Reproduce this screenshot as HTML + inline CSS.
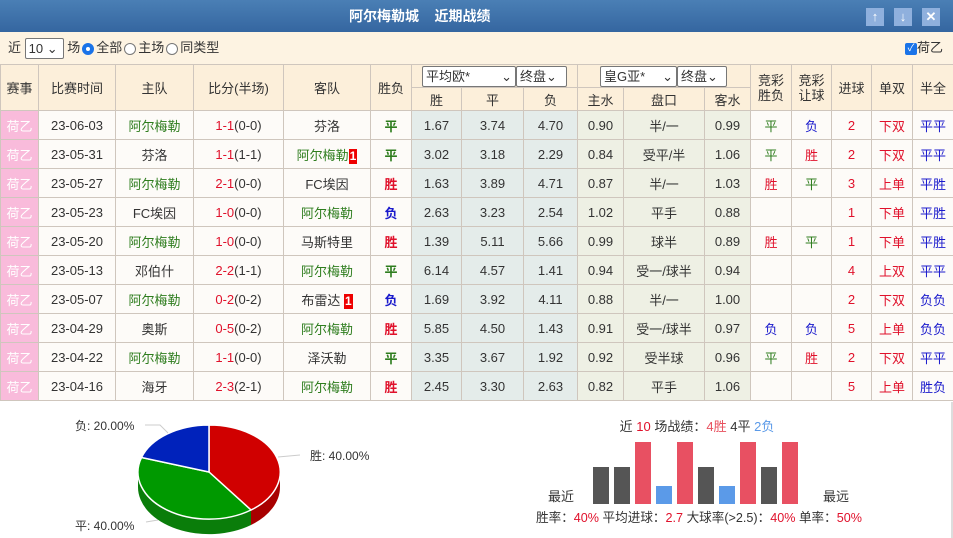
<!DOCTYPE html>
<html><head><meta charset="utf-8"><style>
*{margin:0;padding:0;box-sizing:border-box}
body{width:953px;height:538px;overflow:hidden;background:#fff;font-family:"Liberation Sans","Noto Sans CJK SC",sans-serif;font-size:13px;color:#333;position:relative}
.title{position:absolute;left:0;top:0;width:953px;height:32px;background:linear-gradient(#4a7fb5,#3566a0);color:#fff;font-weight:bold;font-size:14px;line-height:32px}
.btn{position:absolute;top:8px;width:18px;height:18px;background:#8fb0dd;color:#fff;font-size:13px;line-height:18px;text-align:center;font-weight:bold}
.filter{position:absolute;left:0;top:32px;width:953px;height:32px;background:#fdf3e2;line-height:32px;padding-left:8px;font-size:13px}
.sel{display:inline-block;border:1px solid #777;border-radius:2px;background:#fff;height:21px;line-height:19px;padding:0 3px;vertical-align:middle;font-size:13px;text-align:left}
.rad{display:inline-block;width:12px;height:12px;border:1px solid #777;border-radius:50%;vertical-align:middle;background:#fff;margin:0 2px}
table{position:absolute;left:0;top:64px;border-collapse:collapse;table-layout:fixed;width:953px}
td{border:1px solid #cfc6bd;text-align:center;height:29px;padding:0;white-space:nowrap;overflow:hidden}
.h td{background:#fcefda;height:23px;color:#333}
.r td{background:#fdfbf8}
td.lg{background:#f9bbdb !important;color:#fff}
.r td.eu{background:#e4ecea}
.r td.as{background:#eef0e4}
.g{color:#2e7d1e}.rd{color:#e0112b}.b{color:#1a1acc}
.bg{color:#2e7d1e;font-weight:bold}.br{color:#e0112b;font-weight:bold}.bb{color:#1a1acc;font-weight:bold}
.n1{display:inline-block;background:#e00;color:#fff;font-weight:bold;font-size:12px;line-height:15px;padding:0 1px}
</style></head><body>
<div class="title"><span style="position:absolute;left:349px">阿尔梅勒城&nbsp;&nbsp;&nbsp;&nbsp;近期战绩</span></div>
<div class="btn" style="left:866px">↑</div><div class="btn" style="left:894px">↓</div><div class="btn" style="left:922px">✕</div>
<div class="filter">近 <span class="sel" style="width:39px">10 ⌄</span> 场<span class="rad" style="border:4px solid #1a73e8"></span>全部<span class="rad"></span>主场<span class="rad"></span>同类型
<span style="position:absolute;right:10px;top:0"><span style="display:inline-block;width:12px;height:12px;background:#1a73e8;color:#fff;font-size:10px;line-height:12px;text-align:center;vertical-align:middle;border-radius:2px">✓</span>荷乙</span></div>
<table>
<colgroup><col style="width:38px"><col style="width:77px"><col style="width:78px"><col style="width:90px"><col style="width:87px"><col style="width:41px"><col style="width:50px"><col style="width:62px"><col style="width:54px"><col style="width:46px"><col style="width:81px"><col style="width:46px"><col style="width:41px"><col style="width:40px"><col style="width:40px"><col style="width:41px"><col style="width:41px"></colgroup>
<tr class="h"><td rowspan="2">赛事</td><td rowspan="2">比赛时间</td><td rowspan="2">主队</td><td rowspan="2">比分(半场)</td><td rowspan="2">客队</td><td rowspan="2">胜负</td><td colspan="3" style="text-align:left;padding-left:10px"><span class="sel" style="width:94px">平均欧* <span style="float:right">⌄</span></span><span class="sel" style="width:51px">终盘⌄</span></td><td colspan="3" style="text-align:left;padding-left:22px"><span class="sel" style="width:77px">皇G亚* <span style="float:right">⌄</span></span><span class="sel" style="width:50px">终盘⌄</span></td><td rowspan="2" style="line-height:15px">竞彩<br>胜负</td><td rowspan="2" style="line-height:15px">竞彩<br>让球</td><td rowspan="2">进球</td><td rowspan="2">单双</td><td rowspan="2">半全</td></tr>
<tr class="h"><td>胜</td><td>平</td><td>负</td><td>主水</td><td>盘口</td><td>客水</td></tr>
<tr class="r"><td class="lg">荷乙</td><td>23-06-03</td><td class="g">阿尔梅勒</td><td><span class="rd">1-1</span>(0-0)</td><td>芬洛</td><td class="bg">平</td><td class="eu">1.67</td><td class="eu">3.74</td><td class="eu">4.70</td><td class="as">0.90</td><td class="as">半/一</td><td class="as">0.99</td><td class="g">平</td><td class="b">负</td><td class="rd">2</td><td class="rd">下双</td><td class="b">平平</td></tr>
<tr class="r"><td class="lg">荷乙</td><td>23-05-31</td><td>芬洛</td><td><span class="rd">1-1</span>(1-1)</td><td class="g">阿尔梅勒<span class="n1">1</span></td><td class="bg">平</td><td class="eu">3.02</td><td class="eu">3.18</td><td class="eu">2.29</td><td class="as">0.84</td><td class="as">受平/半</td><td class="as">1.06</td><td class="g">平</td><td class="rd">胜</td><td class="rd">2</td><td class="rd">下双</td><td class="b">平平</td></tr>
<tr class="r"><td class="lg">荷乙</td><td>23-05-27</td><td class="g">阿尔梅勒</td><td><span class="rd">2-1</span>(0-0)</td><td>FC埃因</td><td class="br">胜</td><td class="eu">1.63</td><td class="eu">3.89</td><td class="eu">4.71</td><td class="as">0.87</td><td class="as">半/一</td><td class="as">1.03</td><td class="rd">胜</td><td class="g">平</td><td class="rd">3</td><td class="rd">上单</td><td class="b">平胜</td></tr>
<tr class="r"><td class="lg">荷乙</td><td>23-05-23</td><td>FC埃因</td><td><span class="rd">1-0</span>(0-0)</td><td class="g">阿尔梅勒</td><td class="bb">负</td><td class="eu">2.63</td><td class="eu">3.23</td><td class="eu">2.54</td><td class="as">1.02</td><td class="as">平手</td><td class="as">0.88</td><td></td><td></td><td class="rd">1</td><td class="rd">下单</td><td class="b">平胜</td></tr>
<tr class="r"><td class="lg">荷乙</td><td>23-05-20</td><td class="g">阿尔梅勒</td><td><span class="rd">1-0</span>(0-0)</td><td>马斯特里</td><td class="br">胜</td><td class="eu">1.39</td><td class="eu">5.11</td><td class="eu">5.66</td><td class="as">0.99</td><td class="as">球半</td><td class="as">0.89</td><td class="rd">胜</td><td class="g">平</td><td class="rd">1</td><td class="rd">下单</td><td class="b">平胜</td></tr>
<tr class="r"><td class="lg">荷乙</td><td>23-05-13</td><td>邓伯什</td><td><span class="rd">2-2</span>(1-1)</td><td class="g">阿尔梅勒</td><td class="bg">平</td><td class="eu">6.14</td><td class="eu">4.57</td><td class="eu">1.41</td><td class="as">0.94</td><td class="as">受一/球半</td><td class="as">0.94</td><td></td><td></td><td class="rd">4</td><td class="rd">上双</td><td class="b">平平</td></tr>
<tr class="r"><td class="lg">荷乙</td><td>23-05-07</td><td class="g">阿尔梅勒</td><td><span class="rd">0-2</span>(0-2)</td><td>布雷达 <span class="n1">1</span></td><td class="bb">负</td><td class="eu">1.69</td><td class="eu">3.92</td><td class="eu">4.11</td><td class="as">0.88</td><td class="as">半/一</td><td class="as">1.00</td><td></td><td></td><td class="rd">2</td><td class="rd">下双</td><td class="b">负负</td></tr>
<tr class="r"><td class="lg">荷乙</td><td>23-04-29</td><td>奥斯</td><td><span class="rd">0-5</span>(0-2)</td><td class="g">阿尔梅勒</td><td class="br">胜</td><td class="eu">5.85</td><td class="eu">4.50</td><td class="eu">1.43</td><td class="as">0.91</td><td class="as">受一/球半</td><td class="as">0.97</td><td class="b">负</td><td class="b">负</td><td class="rd">5</td><td class="rd">上单</td><td class="b">负负</td></tr>
<tr class="r"><td class="lg">荷乙</td><td>23-04-22</td><td class="g">阿尔梅勒</td><td><span class="rd">1-1</span>(0-0)</td><td>泽沃勒</td><td class="bg">平</td><td class="eu">3.35</td><td class="eu">3.67</td><td class="eu">1.92</td><td class="as">0.92</td><td class="as">受半球</td><td class="as">0.96</td><td class="g">平</td><td class="rd">胜</td><td class="rd">2</td><td class="rd">下双</td><td class="b">平平</td></tr>
<tr class="r"><td class="lg">荷乙</td><td>23-04-16</td><td>海牙</td><td><span class="rd">2-3</span>(2-1)</td><td class="g">阿尔梅勒</td><td class="br">胜</td><td class="eu">2.45</td><td class="eu">3.30</td><td class="eu">2.63</td><td class="as">0.82</td><td class="as">平手</td><td class="as">1.06</td><td></td><td></td><td class="rd">5</td><td class="rd">上单</td><td class="b">胜负</td></tr>
</table>
<div style="position:absolute;left:951px;top:402px;width:2px;height:136px;background:#ddd"></div>
<svg style="position:absolute;left:0;top:402px" width="953" height="136" viewBox="0 402 953 136" font-family="Liberation Sans, Noto Sans CJK SC, sans-serif" font-size="12">
<path d="M280 472 L280 487 A71 47 0 0 1 251 525 L251 510 A71 47 0 0 0 280 472Z" fill="#a80000"/>
<path d="M251 510 L251 525 A71 47 0 0 1 138 487 L138 472 A71 47 0 0 0 251 510Z" fill="#0a7d0a"/>
<path d="M209 472 L209 425 A71 47 0 0 1 251 510Z" fill="#d00000" stroke="#fff" stroke-width="1.5"/>
<path d="M209 472 L251 510 A71 47 0 0 1 141.5 457.5Z" fill="#009900" stroke="#fff" stroke-width="1.5"/>
<path d="M209 472 L141.5 457.5 A71 47 0 0 1 209 425Z" fill="#0022bb" stroke="#fff" stroke-width="1.5"/>
<path d="M145 425 L160 425 L168 433" fill="none" stroke="#ccc"/>
<path d="M278 457 L300 455" fill="none" stroke="#ccc"/>
<path d="M146 522 L158 520" fill="none" stroke="#ccc"/>
<text x="75" y="430" fill="#333">负: 20.00%</text>
<text x="310" y="460" fill="#333">胜: 40.00%</text>
<text x="75" y="530" fill="#333">平: 40.00%</text>
<text x="697" y="431" text-anchor="middle" font-size="13" fill="#333">近 <tspan fill="#e0112b">10</tspan> 场战绩：<tspan fill="#e8505e">4胜</tspan> 4平 <tspan fill="#5b9ae8">2负</tspan></text>
<g>
<rect x="593" y="467" width="16" height="37" fill="#555"/>
<rect x="614" y="467" width="16" height="37" fill="#555"/>
<rect x="635" y="442" width="16" height="62" fill="#e85062"/>
<rect x="656" y="486" width="16" height="18" fill="#5b9ae8"/>
<rect x="677" y="442" width="16" height="62" fill="#e85062"/>
<rect x="698" y="467" width="16" height="37" fill="#555"/>
<rect x="719" y="486" width="16" height="18" fill="#5b9ae8"/>
<rect x="740" y="442" width="16" height="62" fill="#e85062"/>
<rect x="761" y="467" width="16" height="37" fill="#555"/>
<rect x="782" y="442" width="16" height="62" fill="#e85062"/>
</g>
<text x="548" y="501" font-size="13" fill="#333">最近</text>
<text x="823" y="501" font-size="13" fill="#333">最远</text>
<text x="536" y="522" font-size="13" fill="#333" textLength="326" lengthAdjust="spacingAndGlyphs">胜率：<tspan fill="#e0112b">40%</tspan> 平均进球：<tspan fill="#e0112b">2.7</tspan> 大球率(&gt;2.5)：<tspan fill="#e0112b">40%</tspan> 单率：<tspan fill="#e0112b">50%</tspan></text>
</svg>
</body></html>
